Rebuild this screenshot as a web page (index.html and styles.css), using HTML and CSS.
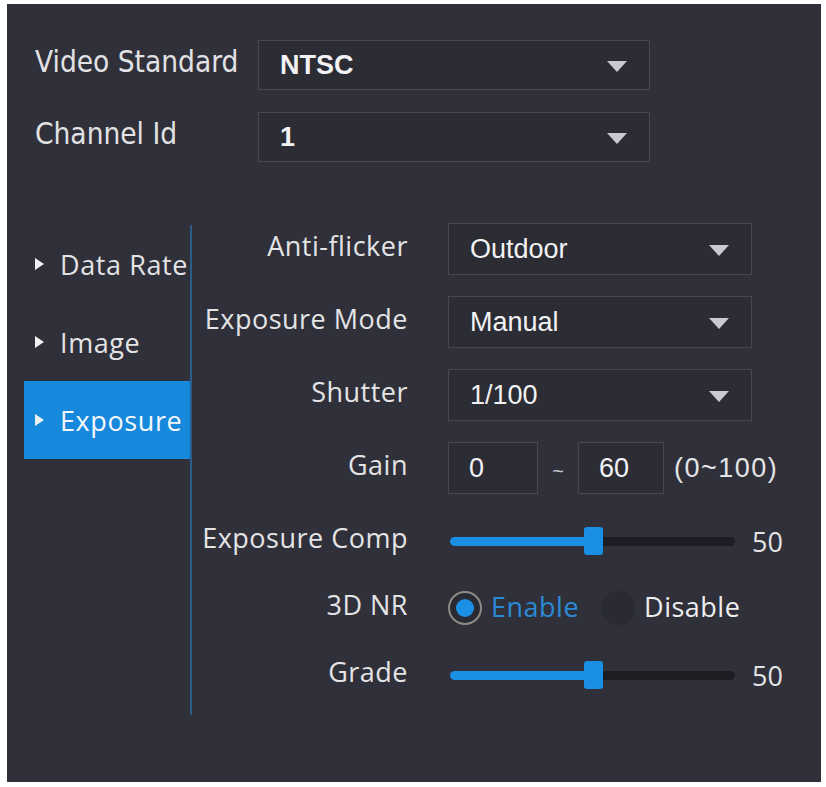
FILE: index.html
```html
<!DOCTYPE html>
<html lang="en">
<head>
    <meta charset="UTF-8">
    <title>Camera Settings</title>
    <link rel="stylesheet" href="styles.css">
</head>
<body>
    <div class="panel">
        <div class="general">
            <span class="glabel">Video Standard</span>
            <div class="select"><span class="value bold">NTSC</span><span class="caret"></span></div>
            <span class="glabel">Channel Id</span>
            <div class="select"><span class="value bold">1</span><span class="caret"></span></div>
        </div>

        <div class="settings">
            <ul class="side-nav">
                <li class="nav-item">Data Rate</li>
                <li class="nav-item">Image</li>
                <li class="nav-item active">Exposure</li>
            </ul>

            <div class="form">
                <span class="label">Anti-flicker</span>
                <div class="select"><span class="value">Outdoor</span><span class="caret"></span></div>

                <span class="label">Exposure Mode</span>
                <div class="select"><span class="value">Manual</span><span class="caret"></span></div>

                <span class="label">Shutter</span>
                <div class="select"><span class="value">1/100</span><span class="caret"></span></div>

                <span class="label">Gain</span>
                <div class="range">
                    <div class="box first">0</div>
                    <span class="tilde">~</span>
                    <div class="box">60</div>
                    <span class="hint">(0~100)</span>
                </div>

                <span class="label">Exposure Comp</span>
                <div class="slider">
                    <div class="track"><div class="fill" style="width: 50%"></div><div class="thumb" style="left: 50%"></div></div>
                    <span class="num">50</span>
                </div>

                <span class="label">3D NR</span>
                <div class="radios">
                    <span class="radio on"></span><span class="rtext on">Enable</span>
                    <span class="radio"></span><span class="rtext">Disable</span>
                </div>

                <span class="label">Grade</span>
                <div class="slider">
                    <div class="track"><div class="fill" style="width: 50%"></div><div class="thumb" style="left: 50%"></div></div>
                    <span class="num">50</span>
                </div>
            </div>
        </div>
    </div>
</body>
</html>
```

FILE: styles.css
```css
body {
    margin: 0;
    background: #fff;
    font-family: "Open Sans", "Noto Sans", sans-serif;
    color: #e4e4e6;
}
.panel {
    width: 814px;
    height: 778px;
    margin: 4px 0 0 7px;
    box-sizing: border-box;
    padding-top: 36px;
    background: #2f3039;
    overflow: hidden;
}

/* top block */
.general {
    display: grid;
    grid-template-columns: 223px 392px;
    grid-auto-rows: 50px;
    row-gap: 22px;
    padding-left: 28px;
}
.glabel {
    font-family: "DejaVu Sans Condensed", "DejaVu Sans", sans-serif;
    font-size: 29.5px;
    white-space: nowrap;
    align-self: center;
    margin-top: -6px;
    color: #e2e2e4;
}

/* dropdowns */
.select {
    display: flex;
    align-items: center;
    justify-content: space-between;
    border: 1px solid #46474f;
    background: #2b2c34;
    padding: 0 22px 0 21px;
}
.value {
    font-family: "Liberation Sans", Arial, sans-serif;
    font-size: 27px;
    color: #f2f2f4;
}
.value.bold {
    font-weight: bold;
}
.caret {
    width: 0;
    height: 0;
    border-left: 10px solid transparent;
    border-right: 10px solid transparent;
    border-top: 11px solid #c9c9d1;
    margin-top: 3px;
}

/* lower block */
.settings {
    display: flex;
    align-items: flex-start;
    margin-top: 61px;
}
.side-nav {
    list-style: none;
    margin: 2px 0 0 17px;
    padding: 0;
    width: 166px;
    height: 490px;
    border-right: 2px solid #2a5d88;
}
.nav-item {
    height: 78px;
    display: flex;
    align-items: center;
    padding-left: 11px;
    font-size: 27px;
    letter-spacing: 0.6px;
    white-space: nowrap;
    color: #e4e4e6;
}
.nav-item::before {
    content: "";
    border-top: 6px solid transparent;
    border-bottom: 6px solid transparent;
    border-left: 9px solid #f0f0f2;
    margin-right: 16px;
}
.nav-item.active {
    background: #1789dc;
    color: #f4f8fc;
}

.form {
    display: grid;
    grid-template-columns: 216px 304px;
    grid-template-rows: 52px 52px 52px 52px 52px 40px 52px;
    column-gap: 40px;
    row-gap: 21px;
}
.label {
    text-align: right;
    align-self: center;
    margin-top: -8px;
    font-size: 27px;
    letter-spacing: 0.5px;
    white-space: nowrap;
    color: #e4e4e6;
}

/* gain range */
.range {
    display: flex;
    align-items: center;
}
.box {
    flex-shrink: 0;
    width: 86px;
    height: 52px;
    box-sizing: border-box;
    border: 1px solid #46474f;
    background: #2b2c34;
    padding-left: 20px;
    display: flex;
    align-items: center;
    font-family: "Liberation Sans", Arial, sans-serif;
    font-size: 27px;
    color: #f2f2f4;
}
.box.first {
    width: 90px;
}
.tilde {
    flex-shrink: 0;
    width: 40px;
    margin-top: 6px;
    text-align: center;
    font-family: "Liberation Sans", Arial, sans-serif;
    font-size: 20px;
    color: #c9c9d1;
}
.hint {
    margin-left: 10px;
    font-family: "Liberation Sans", Arial, sans-serif;
    font-size: 27px;
    letter-spacing: 1.5px;
    color: #e4e4e6;
    white-space: nowrap;
}

/* sliders */
.slider {
    display: flex;
    align-items: center;
}
.track {
    position: relative;
    flex-shrink: 0;
    width: 285px;
    height: 9px;
    margin-left: 2px;
    border-radius: 5px;
    background: #1d1e24;
}
.fill {
    height: 100%;
    border-radius: 5px 0 0 5px;
    background: #1a8fe3;
}
.thumb {
    position: absolute;
    top: -10px;
    width: 19px;
    height: 28px;
    margin-left: -9px;
    border-radius: 3px;
    background: #1a8fe3;
}
.num {
    flex-shrink: 0;
    margin-left: 17px;
    font-size: 27px;
    color: #e4e4e6;
}

/* radio group */
.radios {
    display: flex;
    align-items: center;
}
.radio {
    flex-shrink: 0;
    width: 34px;
    height: 34px;
    box-sizing: border-box;
    border-radius: 50%;
    background: #2a2b32;
    display: flex;
    align-items: center;
    justify-content: center;
}
.radio.on {
    border: 2px solid #8f8a86;
}
.radio.on::after {
    content: "";
    width: 18px;
    height: 18px;
    border-radius: 50%;
    background: #1a8fe3;
}
.rtext {
    margin: -4px 22px 0 9px;
    font-size: 27px;
    letter-spacing: 0.5px;
    white-space: nowrap;
    color: #eeeef0;
}
.rtext.on {
    color: #2a8ad6;
}
```
